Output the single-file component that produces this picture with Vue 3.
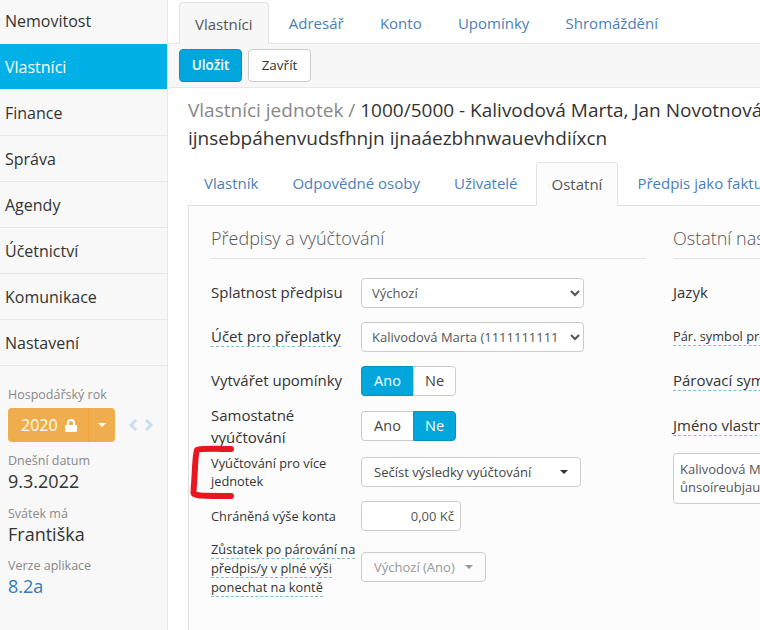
<script setup>
const menu = ['Nemovitost', 'Vlastníci', 'Finance', 'Správa', 'Agendy', 'Účetnictví', 'Komunikace', 'Nastavení']
const tabs = ['Vlastníci', 'Adresář', 'Konto', 'Upomínky', 'Shromáždění']
const subTabs = ['Vlastník', 'Odpovědné osoby', 'Uživatelé', 'Ostatní', 'Předpis jako faktura']
</script>

<template>
  <div class="app">
    <aside class="side">
      <nav class="menu">
        <a v-for="m in menu" :key="m" class="menu-item" :class="{ on: m === 'Vlastníci' }">{{ m }}</a>
      </nav>
      <div class="info">
        <div class="info-label">Hospodářský rok</div>
        <div class="year">
          <div class="year-main">
            2020
            <svg class="lock" viewBox="0 0 12 13" width="12" height="13">
              <path fill="#fff" d="M1 6h1V4a4 4 0 0 1 8 0v2h1a1 1 0 0 1 1 1v5a1 1 0 0 1-1 1H1a1 1 0 0 1-1-1V7a1 1 0 0 1 1-1zm3 0h4V4a2 2 0 0 0-4 0z"/>
            </svg>
          </div>
          <div class="year-caret"><i class="caret white"></i></div>
          <div class="arrows">
            <svg viewBox="0 0 10 12" width="10" height="12"><path d="M8 1 3 6l5 5" fill="none" stroke="#c9dff2" stroke-width="3"/></svg>
            <svg viewBox="0 0 10 12" width="10" height="12"><path d="m2 1 5 5-5 5" fill="none" stroke="#c9dff2" stroke-width="3"/></svg>
          </div>
        </div>
        <div class="info-label mt1">Dnešní datum</div>
        <div class="info-value">9.3.2022</div>
        <div class="info-label mt2">Svátek má</div>
        <div class="info-value">Františka</div>
        <div class="info-label mt3">Verze aplikace</div>
        <div class="info-value link">8.2a</div>
      </div>
    </aside>

    <main class="main">
      <div class="tabs top-tabs">
        <a v-for="t in tabs" :key="t" class="tab" :class="{ active: t === 'Vlastníci' }">{{ t }}</a>
      </div>
      <div class="toolbar">
        <button class="btn primary">Uložit</button>
        <button class="btn">Zavřít</button>
      </div>
      <div class="content">
        <h1 class="title"><span class="muted">Vlastníci jednotek / </span>1000/5000 - Kalivodová Marta, Jan Novotnová<br>ijnsebpáhenvudsfhnjn ijnaáezbhnwauevhdiíxcn</h1>
        <div class="tabs sub-tabs">
          <a v-for="t in subTabs" :key="t" class="tab" :class="{ active: t === 'Ostatní' }">{{ t }}</a>
        </div>
        <section class="panel">
          <div class="col left">
            <h2 class="legend">Předpisy a vyúčtování</h2>
            <div class="row r1">
              <label class="lbl up">Splatnost předpisu</label>
              <select class="sel w223"><option>Výchozí</option></select>
            </div>
            <div class="row r2">
              <label class="lbl up"><span class="dash">Účet pro přeplatky</span></label>
              <select class="sel w223"><option>Kalivodová Marta (1111111111</option></select>
            </div>
            <div class="row r3">
              <label class="lbl up">Vytvářet upomínky</label>
              <div class="toggle"><span class="t-a on">Ano</span><span class="t-b">Ne</span></div>
            </div>
            <div class="row r4">
              <label class="lbl tall">Samostatné vyúčtování</label>
              <div class="toggle"><span class="t-a">Ano</span><span class="t-b on">Ne</span></div>
            </div>
            <div class="row r5">
              <label class="lbl small">Vyúčtování pro více jednotek</label>
              <div class="drop w220">Sečíst výsledky vyúčtování<i class="caret dark"></i></div>
            </div>
            <div class="row r6">
              <label class="lbl small">Chráněná výše konta</label>
              <div class="amount">0,00 Kč</div>
            </div>
            <div class="row r7">
              <label class="lbl small three"><span class="dash">Zůstatek po párování na předpis/y v plné výši ponechat na kontě</span></label>
              <div class="drop disabled">Výchozí (Ano)<i class="caret grey"></i></div>
            </div>
          </div>
          <div class="col right">
            <h2 class="legend">Ostatní nastavení</h2>
            <div class="rrow q1"><label class="lbl up">Jazyk</label></div>
            <div class="rrow q2"><label class="lbl tiny up"><span class="dash">Pár. symbol pro předpisy</span></label></div>
            <div class="rrow q3"><label class="lbl up"><span class="dash">Párovací symbol</span></label></div>
            <div class="rrow q4"><label class="lbl up"><span class="dash">Jméno vlastníka</span></label></div>
            <div class="note">Kalivodová Marta, Jan Novotnová<br>ůnsoíreubjaunsbdhfn</div>
          </div>
        </section>
      </div>
    </main>

    <svg class="mark" width="60" height="60" viewBox="0 0 60 60">
      <path d="M43 4C33 4 14 3 9 5 7 9 7 30 5.500 46 5 50 8 50 13 50.500 22 51 34 51 43 51" fill="none" stroke="#e8171f" stroke-width="6" stroke-linecap="round" stroke-linejoin="round"/>
    </svg>
  </div>
</template>

<style>
html, body { margin: 0; background: #fff; overflow: hidden; }
</style>

<style scoped>
.app {
  position: relative;
  display: flex;
  width: 760px;
  height: 630px;
  overflow: hidden;
  font-family: "Open Sans", sans-serif;
  color: #333;
  font-size: 14px;
}
.side {
  flex: 0 0 167px;
  background: #f8f8f8;
  border-right: 1px solid #e7e7e7;
}
.menu-item {
  display: block;
  height: 45px;
  line-height: 46px;
  padding-left: 5px;
  font-size: 16px;
  border-bottom: 1px solid #e7e7e7;
  color: #333;
}
.menu-item:first-child { height: 43px; line-height: 42px; border-bottom: 0; }
.menu-item.on {
  background: #00b0e6;
  color: #fff;
  border-bottom: 0;
  height: 45px;
  margin-top: 1px;
  margin-bottom: 1px;
}
.info { padding: 21px 0 0 8px; }
.info-label { font-size: 12.500px; line-height: 16px; color: #888; }
.info-value { font-size: 18px; line-height: 24px; color: #333; }
.info-value.link { color: #337ab7; }
.mt1 { margin-top: 11px; }
.mt2 { margin-top: 13px; }
.mt3 { margin-top: 12px; }
.year { display: flex; align-items: center; margin-top: 5px; height: 34px; }
.year-main {
  width: 81px;
  height: 34px;
  box-sizing: border-box;
  background: #f0ad4e;
  color: #fff;
  font-size: 16px;
  line-height: 34px;
  padding-left: 13px;
  border-radius: 4px 0 0 4px;
  border-right: 1px solid #eea236;
}
.lock { margin-left: 3px; vertical-align: -1px; }
.year-caret {
  width: 26px;
  height: 34px;
  background: #f0ad4e;
  border-radius: 0 4px 4px 0;
  display: flex;
  align-items: center;
  justify-content: center;
}
.arrows { display: flex; gap: 6px; margin-left: 13px; }
.caret {
  display: inline-block;
  width: 0;
  height: 0;
  border-left: 4px solid transparent;
  border-right: 4px solid transparent;
  border-top: 4px solid #333;
}
.caret.white { border-top-color: #fff; }
.caret.grey { border-top-color: #999; }

.main { flex: 1 1 auto; min-width: 0; }
.tabs { display: flex; white-space: nowrap; }
.tab { display: block; color: #4b7fb8; box-sizing: border-box; font-size: 15px; padding: 0 16px; margin-right: 4.250px; }
.top-tabs {
  height: 43px;
  padding: 2px 0 0 11px;
  box-sizing: border-box;
}
.top-tabs .tab { height: 42px; line-height: 42px; }
.top-tabs .tab.active { padding: 0 15px; }
.tab.active {
  background: #f7f7f7;
  color: #555;
  border: 1px solid #e3e3e3;
  border-bottom: 0;
  border-radius: 4px 4px 0 0;
}
.toolbar {
  height: 45px;
  box-sizing: border-box;
  margin-left: 1px;
  background: #f7f7f7;
  border-top: 1px solid #e7e7e7;
  border-bottom: 1px solid #e7e7e7;
  padding: 5px 0 0 10px;
  display: flex;
  gap: 6px;
}
.btn {
  width: 63px;
  height: 33px;
  font: 14px/1 "Open Sans", sans-serif;
  font-size: 13.500px;
  color: #333;
  background: #fff;
  border: 1px solid #ccc;
  border-radius: 4px;
  padding: 0;
}
.btn.primary { background: #00a6dc; border-color: #0494c3; color: #fff; font-weight: 600; }
.content { padding: 0 0 0 20px; width: 700px; }
.title {
  margin: 8px 0 0;
  font-size: 19px;
  line-height: 28px;
  font-weight: 400;
  color: #333;
  white-space: nowrap;
}
.muted { color: #888; }
.sub-tabs { height: 44px; margin-top: 10px; box-sizing: border-box; padding-left: 1px; }
.sub-tabs .tab { height: 43px; line-height: 43px; padding: 0 15px; margin-right: 4px; }
.sub-tabs .tab.active { background: #fcfcfc; height: 44px; position: relative; z-index: 1; margin-left: -1px; }
.panel {
  display: flex;
  gap: 27px;
  margin-top: -1px;
  height: 440px;
  box-sizing: border-box;
  background: #fcfcfc;
  border: 1px solid #e0e0e0;
  padding: 0 0 0 22px;
  width: 700px;
}
.col.left { flex: 0 0 435px; }
.col.right { flex: 0 0 300px; }
.legend {
  margin: 20px 0 0;
  height: 32px;
  border-bottom: 1px solid #e3e3e3;
  font-size: 18px;
  line-height: 24px;
  font-weight: 300;
  color: #555;
  white-space: nowrap;
}
.row { display: flex; align-items: center; }
.r1 { margin-top: 19px; height: 30px; }
.r2 { margin-top: 14px; height: 30px; }
.r3 { margin-top: 14px; height: 30px; }
.r4 { margin-top: 8px; height: 44px; }
.r5 { margin-top: 6px; height: 36px; }
.r6 { margin-top: 11px; height: 30px; }
.r7 { margin-top: 6px; height: 60px; }
.lbl { flex: 0 0 150px; width: 150px; font-size: 15px; line-height: 22px; color: #333; white-space: normal; }
.lbl.up { padding-bottom: 2px; }
.lbl.tall { padding-right: 30px; box-sizing: border-box; }
.lbl.small { font-size: 12.800px; line-height: 18px; }
.lbl.three { line-height: 19px; padding-top: 2px; }
.dash { border-bottom: 1px dashed #7fbcd6; padding-bottom: 0; }
.lbl.tiny { font-size: 12.800px; }
.sel {
  height: 30px;
  box-sizing: border-box;
  background: #fff;
  border: 1px solid #ccc;
  border-radius: 4px;
  padding: 0 6px;
  font: 13px "Open Sans", sans-serif;
  color: #555;
}
.w223 { width: 223px; }
.toggle { display: flex; height: 30px; font-size: 14.500px; }
.toggle span {
  display: block;
  box-sizing: border-box;
  height: 30px;
  line-height: 28px;
  text-align: center;
  border: 1px solid #ccc;
  background: #fff;
  color: #444;
}
.t-a { width: 52px; border-radius: 4px 0 0 4px; border-right: 0 !important; }
.t-b { width: 43px; border-radius: 0 4px 4px 0; }
.toggle .on { background: #00a6dc; border-color: #0494c3; color: #fff; }
.drop {
  height: 30px;
  box-sizing: border-box;
  border: 1px solid #ccc;
  border-radius: 4px;
  background: #fff;
  font-size: 13px;
  line-height: 28px;
  color: #444;
  padding: 0 12px;
  display: flex;
  align-items: center;
  justify-content: space-between;
}
.w220 { width: 220px; }
.drop.disabled { width: 125px; color: #999; background: #fcfcfc; }
.amount {
  width: 100px;
  height: 30px;
  box-sizing: border-box;
  border: 1px solid #ccc;
  border-radius: 4px;
  background: #fff;
  font-size: 13px;
  line-height: 28px;
  text-align: right;
  padding-right: 6px;
  color: #555;
}
.rrow { height: 30px; display: flex; align-items: center; }
.rrow .lbl { flex: none; width: auto; white-space: nowrap; }
.q1 { margin-top: 19px; }
.q2 { margin-top: 14px; }
.q3 { margin-top: 14px; }
.q4 { margin-top: 15px; }
.note {
  margin-top: 12px;
  width: 300px;
  height: 51px;
  box-sizing: border-box;
  border: 1px solid #ccc;
  border-radius: 4px;
  background: #fff;
  font-size: 13px;
  line-height: 18px;
  padding: 6px 6px;
  color: #555;
  white-space: nowrap;
}
.mark { position: absolute; left: 188px; top: 445px; }
</style>
